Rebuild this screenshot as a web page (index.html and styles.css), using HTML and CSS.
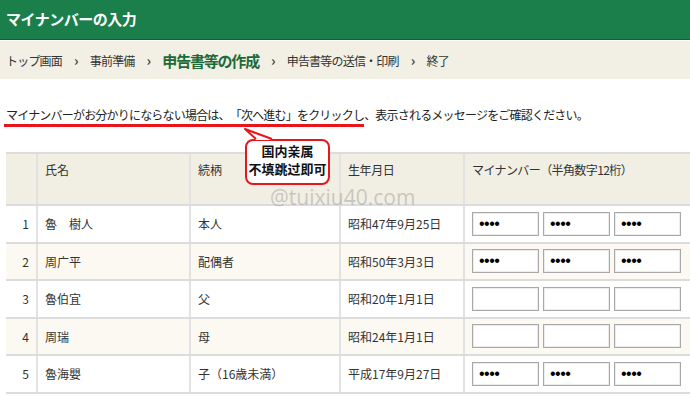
FILE: index.html
```html
<!DOCTYPE html>
<html lang="ja">
<head>
  <meta charset="UTF-8">
  <meta name="viewport" content="width=device-width, initial-scale=1.0">
  <title>マイナンバーの入力</title>
  <link rel="stylesheet" href="styles.css">
</head>
<body>
  <header class="title-bar">
    <h1>マイナンバーの入力</h1>
  </header>

  <!-- パンくず -->
  <nav class="crumbs">
    <span>トップ画面</span>
    <span class="sep">›</span>
    <span>事前準備</span>
    <span class="sep">›</span>
    <span class="current">申告書等の作成</span>
    <span class="sep">›</span>
    <span>申告書等の送信・印刷</span>
    <span class="sep">›</span>
    <span>終了</span>
  </nav>

  <main class="content">
    <p class="notice"><span class="mark">マイナンバーがお分かりにならない場合は、「次へ進む」をクリックし</span>、表示されるメッセージをご確認ください。</p>

    <div class="callout">
      <svg class="tail" width="1" height="1">
        <polygon points="0,-10 11,1 27,1" fill="#fff"/>
        <polyline points="11,0 0,-10 27,0" fill="none" stroke="#e8161b" stroke-width="2" stroke-linejoin="round"/>
      </svg>
      国内亲属<br>不填跳过即可
    </div>
    <div class="watermark">@tuixiu40.com</div>

    <table class="people">
      <thead>
        <tr>
          <th class="no"></th>
          <th class="name">氏名</th>
          <th class="rel">続柄</th>
          <th class="birth">生年月日</th>
          <th class="number">マイナンバー（半角数字12桁）</th>
        </tr>
      </thead>
      <tbody>
        <tr>
          <td class="no">1</td>
          <td>魯　樹人</td>
          <td>本人</td>
          <td>昭和47年9月25日</td>
          <td><div class="fields"><input type="password" value="1234"><input type="password" value="1234"><input type="password" value="1234"></div></td>
        </tr>
        <tr>
          <td class="no">2</td>
          <td>周广平</td>
          <td>配偶者</td>
          <td>昭和50年3月3日</td>
          <td><div class="fields"><input type="password" value="1234"><input type="password" value="1234"><input type="password" value="1234"></div></td>
        </tr>
        <tr>
          <td class="no">3</td>
          <td>魯伯宜</td>
          <td>父</td>
          <td>昭和20年1月1日</td>
          <td><div class="fields"><input type="password"><input type="password"><input type="password"></div></td>
        </tr>
        <tr>
          <td class="no">4</td>
          <td>周瑞</td>
          <td>母</td>
          <td>昭和24年1月1日</td>
          <td><div class="fields"><input type="password"><input type="password"><input type="password"></div></td>
        </tr>
        <tr>
          <td class="no">5</td>
          <td>魯海嬰</td>
          <td>子（16歳未満）</td>
          <td>平成17年9月27日</td>
          <td><div class="fields"><input type="password" value="1234"><input type="password" value="1234"><input type="password" value="1234"></div></td>
        </tr>
      </tbody>
    </table>
  </main>
</body>
</html>
```

FILE: styles.css
```css
body {
  margin: 0;
  font-family: "Noto Sans CJK JP", "Liberation Sans", sans-serif;
  font-size: 12px;
  color: #333;
  background-color: #fff;
  text-spacing-trim: space-all;
}
.title-bar {
  background-color: #1b7f4c;
  height: 39px;
  border-bottom: 1px solid #12603a;
}
.title-bar h1 {
  margin: 0;
  padding-left: 6px;
  color: #fff;
  font-size: 15px;
  letter-spacing: -0.5px;
  line-height: 37px;
}
.crumbs {
  display: flex;
  align-items: center;
  gap: 12px;
  height: 38px;
  margin-top: 1px;
  padding-left: 6px;
  background-color: #f2efe4;
  letter-spacing: -0.8px;
  color: #333;
}
.crumbs .sep {
  font-weight: bold;
  font-size: 14px;
  color: #444;
}
.crumbs .current {
  font-size: 15px;
  font-weight: bold;
  color: #1d6b3a;
  letter-spacing: -1.2px;
}
.content {
  position: relative;
  padding-top: 28px;
}
.notice {
  margin: 0 0 0 6px;
  line-height: 16px;
  letter-spacing: -0.8px;
  color: #222;
}
.notice .mark {
  border-bottom: 3px solid #e8161b;
  padding-bottom: 1px;
  margin-left: -2px;
  padding-left: 2px;
}
.callout {
  position: absolute;
  left: 245px;
  top: 60px;
  width: 81px;
  height: 41px;
  border: 2px solid #e8161b;
  border-radius: 8px;
  background-color: #fff;
  font-size: 13px;
  font-weight: bold;
  line-height: 18px;
  text-align: center;
  color: #111;
  padding-top: 1px;
  z-index: 2;
}
.callout .tail {
  position: absolute;
  left: -2px;
  top: -2px;
  overflow: visible;
}
.watermark {
  position: absolute;
  left: 270px;
  top: 104px;
  font-family: "Open Sans", sans-serif;
  font-size: 21px;
  color: rgba(120, 120, 120, 0.35);
  z-index: 2;
}
.people {
  margin: 29px 0 0 6px;
  width: 684px;
  border-collapse: collapse;
  table-layout: fixed;
}
.people th,
.people td {
  border-top: 2px solid #dcdcdc;
  border-bottom: 2px solid #dcdcdc;
  border-left: 2px solid #e2e2e2;
  padding: 0 7px;
  text-align: left;
  font-weight: normal;
}
.people th:first-child,
.people td:first-child {
  border-left: none;
}
.people th {
  background-color: #f1eee3;
  height: 43px;
  vertical-align: top;
  padding-top: 7px;
}
.people td {
  height: 35.5px;
  vertical-align: middle;
}
.people tbody tr:nth-child(even) td {
  background-color: #fbf9f2;
}
.people .no {
  width: 16px;
  text-align: right;
}
.people .name { width: 137px; }
.people .rel { width: 134px; }
.people .birth { width: 108px; letter-spacing: -0.4px; }
.people .number { width: 211px; letter-spacing: -0.6px; }
.fields {
  display: flex;
  gap: 4px;
}
.fields input {
  width: 67px;
  height: 24px;
  box-sizing: border-box;
  border: 1px solid #a8a8a8;
  box-shadow: inset 0 0 0 1px #ececec;
  background-color: #fff;
  padding: 0 6px;
  font-size: 16px;
  color: #000;
  letter-spacing: -0.5px;
}
```
